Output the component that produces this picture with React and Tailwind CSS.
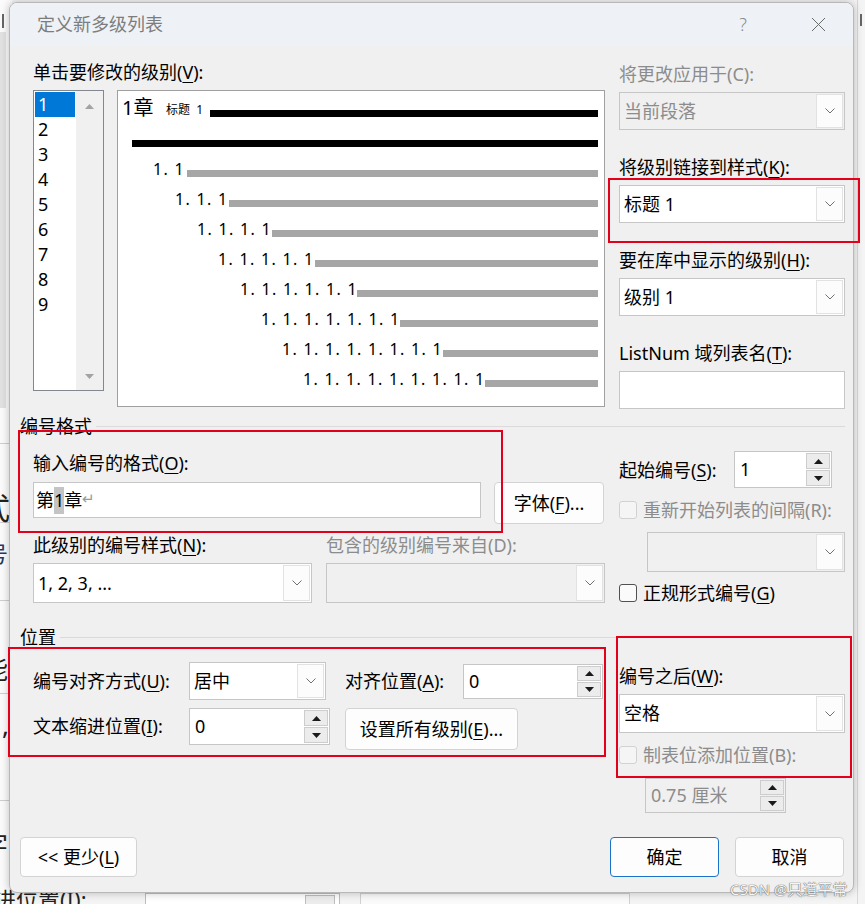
import React from 'react';

const Chevron = () => (
  <svg width="10" height="6" viewBox="0 0 10 6">
    <path d="M0.5 0.5 L5 5 L9.5 0.5" fill="none" stroke="#707070" strokeWidth="1" />
  </svg>
);

const Tri = ({ down, color = '#1a1a1a' }) => (
  <svg width="9" height="5" viewBox="0 0 9 5">
    <path d={down ? 'M0 0 H9 L4.5 5 Z' : 'M0 5 H9 L4.5 0 Z'} fill={color} />
  </svg>
);

const Combo = ({ value, disabled, className = '' }) => (
  <div className={`flex border border-[#c6c6c6] ${disabled ? 'bg-[#f0f0f0] text-[#8c8c8c]' : 'bg-white text-black'} ${className}`}>
    <div className="flex-1 flex items-center pl-[4px] whitespace-nowrap">{value}</div>
    <div className="w-[27px] m-[1px] bg-[#fcfcfc] border border-[#e2e2e2] flex items-center justify-center">
      <Chevron />
    </div>
  </div>
);

const Spin = ({ value, disabled, className = '' }) => (
  <div className={`flex border border-[#c6c6c6] ${disabled ? 'bg-[#f0f0f0] text-[#8c8c8c]' : 'bg-white text-black'} ${className}`}>
    <div className="flex-1 flex items-center pl-[5px] whitespace-nowrap">{value}</div>
    <div className="w-[26px] flex flex-col p-[1px] gap-[1px]">
      <div className="flex-1 border border-[#cdcdcd] bg-[#ececec] flex items-center justify-center">
        <Tri />
      </div>
      <div className="flex-1 border border-[#cdcdcd] bg-[#ececec] flex items-center justify-center">
        <Tri down />
      </div>
    </div>
  </div>
);

const Check = ({ label, disabled }) => (
  <div className="flex items-center h-[24px] gap-[6px] whitespace-nowrap">
    <div className={`w-[18px] h-[18px] rounded-[3px] border ${disabled ? 'border-[#d2d2d2] bg-[#f5f5f5]' : 'border-[#505050] bg-[#fafafa]'}`} />
    <span className={disabled ? 'text-[#8c8c8c]' : 'text-black'}>{label}</span>
  </div>
);

const Btn = ({ children, primary, className = '' }) => (
  <div className={`flex items-center justify-center rounded-[4px] border bg-[#fdfdfd] whitespace-nowrap ${primary ? 'border-[#1a73c8]' : 'border-[#d3d3d3]'} ${className}`}>
    {children}
  </div>
);

const K = ({ children }) => <span className="underline underline-offset-[3px]">{children}</span>;

const levels = [
  { text: '1. 1', pl: 'pl-[35px]', w: 'w-[34px]' },
  { text: '1. 1. 1', pl: 'pl-[57px]', w: 'w-[54px]' },
  { text: '1. 1. 1. 1', pl: 'pl-[79px]', w: 'w-[75px]' },
  { text: '1. 1. 1. 1. 1', pl: 'pl-[100px]', w: 'w-[97px]' },
  { text: '1. 1. 1. 1. 1. 1', pl: 'pl-[122px]', w: 'w-[117px]' },
  { text: '1. 1. 1. 1. 1. 1. 1', pl: 'pl-[143px]', w: 'w-[139px]' },
  { text: '1. 1. 1. 1. 1. 1. 1. 1', pl: 'pl-[164px]', w: 'w-[161px]' },
  { text: '1. 1. 1. 1. 1. 1. 1. 1. 1', pl: 'pl-[185px]', w: 'w-[182px]' },
];

const GroupHeader = ({ title, className = '' }) => (
  <div className={`flex items-center h-[24px] ${className}`}>
    <span className="leading-[24px]">{title}</span>
    <div className="flex-1 ml-[4px] border-t border-[#dadada]" />
  </div>
);

export default function App() {
  return (
    <div className="relative w-[865px] h-[904px] overflow-hidden bg-[#f4f4f4] font-['Noto_Sans','Noto_Sans_CJK_SC',sans-serif] text-[18px] text-black">
      {/* things behind the dialog */}
      <div className="absolute left-0 top-0 w-[12px] h-full bg-[#fbfbfb]" />
      <div className="absolute left-[2px] top-[14px] w-[2px] h-[14px] bg-[#666]" />
      <div className="absolute left-0 top-[32px] w-[6px] h-[376px] bg-[#e2e2e2]" />
      <div className="absolute left-0 top-[443px] w-[12px] h-px bg-[#cfcfcf]" />
      <div className="absolute left-0 top-[522px] w-[12px] h-px bg-[#cfcfcf]" />
      <div className="absolute left-0 top-[600px] w-[12px] h-px bg-[#cfcfcf]" />
      <div className="absolute left-0 top-[693px] w-[12px] h-px bg-[#cfcfcf]" />
      <div className="absolute left-0 top-[800px] w-[12px] h-px bg-[#cfcfcf]" />
      <span className="absolute left-[-20px] top-[493px] text-[30px] leading-[30px] text-[#222]">式</span>
      <span className="absolute left-[-14px] top-[542px] text-[22px] leading-[22px] text-[#1d3a6b]">号</span>
      <span className="absolute left-[-18px] top-[656px] text-[26px] leading-[26px] text-[#222]">能</span>
      <span className="absolute left-[2px] top-[712px] text-[26px] leading-[26px] text-[#222]">,</span>
      <span className="absolute left-[-18px] top-[832px] text-[26px] leading-[26px] text-[#222]">字</span>
      <div className="absolute left-[857px] top-0 w-px h-full bg-[#d8d8d8]" />
      <div className="absolute left-[860px] top-[14px] w-[2px] h-[12px] bg-[#666]" />
      <span className="absolute left-[-6px] top-[886px] text-[22px] leading-[26px] text-[#222]">进位置(I):</span>
      <div className="absolute left-[145px] top-[893px] w-[195px] h-[20px] border border-[#bdbdbd] bg-white" />
      <div className="absolute left-[305px] top-[895px] w-[30px] h-[20px] border border-[#bdbdbd] bg-[#ececec]" />
      <div className="absolute left-[360px] top-[893px] w-[270px] h-[20px] border border-[#d0d0d0] bg-[#fafafa]" />

      {/* dialog window */}
      <div className="absolute left-[9px] top-[2px] w-[845px] h-[891px] rounded-[8px] border border-[#b8b8b8] bg-[#f0f0f0] shadow-[0_0_8px_rgba(0,0,0,0.25)] flex flex-col overflow-hidden">
        <div className="h-[43px] shrink-0 bg-[#eef2f7] flex items-center pl-[27px]">
          <span className="text-[#7d7d7d]">定义新多级列表</span>
          <div className="ml-auto flex items-center gap-[29px] pr-[12px]">
            <span className="w-[46px] text-center text-[#8a8a8a] font-light">?</span>
            <div className="w-[46px] flex justify-center">
              <svg width="15" height="15" viewBox="0 0 15 15">
                <path d="M1 1 L14 14 M14 1 L1 14" stroke="#6a6a6a" strokeWidth="1" />
              </svg>
            </div>
          </div>
        </div>

        <div className="flex-1 flex flex-col pl-[10px] pr-[8px]">
          {/* top */}
          <div className="flex pl-[13px] gap-[14px] mt-[14px]">
            <div className="w-[572px]">
              <div className="leading-[24px]">单击要修改的级别(<K>V</K>):</div>
              <div className="flex gap-[13px] mt-[6px] items-start">
                <div className="w-[71px] h-[301px] border border-[#828790] bg-white flex">
                  <div className="w-[42px] pt-[1px]">
                    {['1', '2', '3', '4', '5', '6', '7', '8', '9'].map((n, i) => (
                      <div key={n} className={`h-[25px] leading-[25px] pl-[3px] ml-[1px] w-[40px] ${i === 0 ? 'bg-[#0078d7] text-white' : ''}`}>{n}</div>
                    ))}
                  </div>
                  <div className="flex-1 bg-[#f0f0f0] flex flex-col items-center justify-between pt-[13px] pb-[11px]">
                    <Tri color="#a3a3a3" />
                    <Tri down color="#a3a3a3" />
                  </div>
                </div>
                <div className="w-[488px] h-[317px] border border-[#a0a0a0] bg-white pt-[6px] pr-[6px]">
                  <div className="h-[30px] flex items-end pl-[4px]">
                    <span className="w-[44px] shrink-0 text-[20px] leading-[20px] mb-[9px] whitespace-nowrap">1章</span>
                    <span className="w-[44px] shrink-0 text-[12px] leading-[12px] mb-[11px] whitespace-nowrap">标题&nbsp;&nbsp;1</span>
                    <div className="flex-1 h-[7px] bg-black mb-[10px]" />
                  </div>
                  <div className="h-[30px] flex items-end pl-[14px]">
                    <div className="flex-1 h-[7px] bg-black mb-[10px]" />
                  </div>
                  {levels.map((l) => (
                    <div key={l.text} className={`h-[30px] flex items-end ${l.pl}`}>
                      <span className={`${l.w} shrink-0 text-[16px] leading-[16px] tracking-[1.3px] mb-[10px] whitespace-nowrap`}>{l.text}</span>
                      <div className="flex-1 h-[7px] bg-[#a6a6a6] mb-[10px]" />
                    </div>
                  ))}
                </div>
              </div>
            </div>

            <div className="w-[226px] pt-[2px] flex flex-col gap-[25px]">
              <div>
                <div className="leading-[24px] text-[#8c8c8c]">将更改应用于(C):</div>
                <Combo value="当前段落" disabled className="mt-[6px] h-[38px]" />
              </div>
              <div>
                <div className="leading-[24px]">将级别链接到样式(<K>K</K>):</div>
                <Combo value="标题 1" className="mt-[6px] h-[38px]" />
              </div>
              <div>
                <div className="leading-[24px]">要在库中显示的级别(<K>H</K>):</div>
                <Combo value="级别 1" className="mt-[6px] h-[38px]" />
              </div>
              <div>
                <div className="leading-[24px]">ListNum 域列表名(<K>T</K>):</div>
                <div className="mt-[6px] h-[38px] border border-[#c6c6c6] bg-white" />
              </div>
            </div>
          </div>

          {/* numbering format */}
          <GroupHeader title="编号格式" className="mt-[5px]" />
          <div className="flex pl-[13px] gap-[14px]">
            <div className="w-[572px]">
              <div className="leading-[24px] mt-[13px]">输入编号的格式(<K>O</K>):</div>
              <div className="flex items-start mt-[7px]">
                <div className="w-[448px] h-[36px] border border-[#c6c6c6] bg-white flex items-center pl-[2px] whitespace-nowrap">
                  <span>第</span>
                  <span className="bg-[#c4c4c4]">1</span>
                  <span>章</span>
                  <span className="text-[15px] text-[#9a9a9a] -mt-[4px]">↵</span>
                </div>
                <Btn className="ml-[13px] w-[110px] h-[42px]">字体(<K>F</K>)...</Btn>
              </div>
              <div className="flex mt-[9px] leading-[24px]">
                <div className="w-[293px]">此级别的编号样式(<K>N</K>):</div>
                <div className="text-[#8c8c8c]">包含的级别编号来自(D):</div>
              </div>
              <div className="flex mt-[6px] gap-[14px]">
                <Combo value="1, 2, 3, ..." className="w-[279px] h-[40px]" />
                <Combo value="" disabled className="w-[279px] h-[40px]" />
              </div>
            </div>

            <div className="w-[226px]">
              <div className="flex items-center mt-[13px]">
                <div className="w-[115px] leading-[24px] whitespace-nowrap">起始编号(<K>S</K>):</div>
                <Spin value="1" className="w-[98px] h-[37px]" />
              </div>
              <div className="mt-[10px]">
                <Check label="重新开始列表的间隔(R):" disabled />
              </div>
              <Combo value="" disabled className="mt-[10px] ml-[28px] w-[198px] h-[40px]" />
              <div className="mt-[9px]">
                <Check label={<>正规形式编号(<K>G</K>)</>} />
              </div>
            </div>
          </div>

          {/* position */}
          <GroupHeader title="位置" className="mt-[20px]" />
          <div className="flex pl-[13px] gap-[14px]">
            <div className="w-[572px]">
              <div className="flex items-center mt-[13px] h-[38px]">
                <div className="w-[156px] whitespace-nowrap">编号对齐方式(<K>U</K>):</div>
                <Combo value="居中" className="w-[137px] h-[38px]" />
                <div className="ml-[19px] w-[118px] whitespace-nowrap">对齐位置(<K>A</K>):</div>
                <Spin value="0" className="w-[140px] h-[35px]" />
              </div>
              <div className="flex items-start mt-[8px]">
                <div className="w-[156px] h-[37px] flex items-center whitespace-nowrap">文本缩进位置(<K>I</K>):</div>
                <Spin value="0" className="w-[141px] h-[37px]" />
                <Btn className="ml-[15px] w-[173px] h-[42px]">设置所有级别(<K>E</K>)...</Btn>
              </div>
            </div>

            <div className="w-[226px]">
              <div className="leading-[24px] mt-[15px]">编号之后(<K>W</K>):</div>
              <Combo value="空格" className="mt-[6px] h-[39px]" />
              <div className="mt-[10px]">
                <Check label="制表位添加位置(B):" disabled />
              </div>
              <Spin value="0.75 厘米" disabled className="mt-[11px] ml-[26px] w-[141px] h-[35px]" />
            </div>
          </div>

          {/* footer */}
          <div className="mt-auto flex pb-[15px]">
            <Btn className="w-[117px] h-[40px]">&lt;&lt; 更少(<K>L</K>)</Btn>
            <Btn primary className="ml-auto w-[109px] h-[40px]">确定</Btn>
            <Btn className="ml-[16px] mr-[1px] w-[109px] h-[40px]">取消</Btn>
          </div>
        </div>
      </div>

      {/* red annotation boxes */}
      <div className="absolute left-[608px] top-[178px] w-[252px] h-[65px] border-2 border-[#e3001b]" />
      <div className="absolute left-[18px] top-[430px] w-[485px] h-[103px] border-2 border-[#e3001b]" />
      <div className="absolute left-[8px] top-[647px] w-[598px] h-[110px] border-2 border-[#e3001b]" />
      <div className="absolute left-[616px] top-[636px] w-[236px] h-[142px] border-2 border-[#e3001b]" />

      <span className="absolute left-[730px] top-[879px] text-[15px] leading-[20px] text-[#f6f6f6] [text-shadow:0_0_1px_#555,0_0_1px_#555]">CSDN @只道平常</span>
    </div>
  );
}
